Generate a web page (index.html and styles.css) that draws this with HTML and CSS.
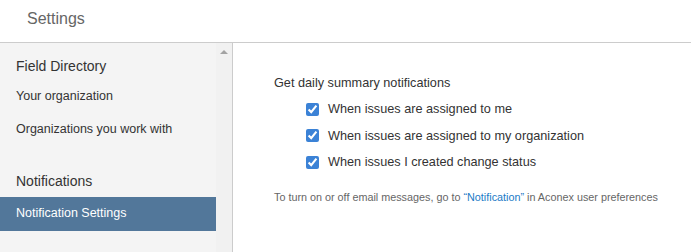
FILE: index.html
```html
<!DOCTYPE html>
<html lang="en">
<head>
    <meta charset="UTF-8">
    <title>Settings</title>
    <link rel="stylesheet" href="styles.css">
</head>
<body>
    <div class="header">Settings</div>
    <div class="page">
        <div class="sidebar">
            <div class="nav">
                <div class="group">Field Directory</div>
                <div class="item">Your organization</div>
                <div class="item">Organizations you work with</div>
                <div class="group spaced">Notifications</div>
                <div class="item active">Notification Settings</div>
            </div>
            <div class="scrollbar">
                <span class="arrow"></span>
            </div>
        </div>
        <div class="content">
            <div class="title">Get daily summary notifications</div>
            <label class="option"><input type="checkbox" checked> When issues are assigned to me</label>
            <label class="option"><input type="checkbox" checked> When issues are assigned to my organization</label>
            <label class="option"><input type="checkbox" checked> When issues I created change status</label>
            <p class="note">To turn on or off email messages, go to <a href="#">“Notification”</a> in Aconex user preferences</p>
        </div>
    </div>
</body>
</html>
```

FILE: styles.css
```css
body {
    margin: 0;
    font-family: Arial, "Liberation Sans", sans-serif;
    background: #fff;
    color: #333;
    height: 252px;
    overflow: hidden;
}

.header {
    height: 42px;
    line-height: 38px;
    padding-left: 27px;
    font-size: 16px;
    color: #666;
    border-bottom: 1px solid #ccc;
}

.page {
    display: flex;
    height: 209px;
}

.sidebar {
    width: 232px;
    display: flex;
    background: #f4f4f4;
    border-right: 1px solid #ccc;
}

.nav {
    flex: 1;
    padding-top: 13px;
}

.group {
    font-size: 14px;
    color: #333;
    padding-left: 16px;
    height: 20px;
    line-height: 20px;
    margin-bottom: 4px;
}

.group.spaced {
    margin-top: 25px;
    margin-bottom: 6px;
}

.item {
    font-size: 12.5px;
    color: #333;
    padding-left: 16px;
    height: 33px;
    line-height: 32px;
}

.item.active {
    height: 34px;
    line-height: 32px;
    background: #52779a;
    color: #fff;
}

.scrollbar {
    width: 16px;
    background: #f1f1f1;
    display: flex;
    justify-content: center;
}

.arrow {
    margin-top: 7px;
    width: 0;
    height: 0;
    border-left: 4px solid transparent;
    border-right: 4px solid transparent;
    border-bottom: 4px solid #a3a3a3;
}

.content {
    flex: 1;
    padding: 33px 0 0 41px;
}

.title {
    font-size: 12.7px;
    color: #333;
    margin-bottom: 6px;
}

.option {
    display: flex;
    align-items: center;
    font-size: 12.7px;
    color: #333;
    margin-left: 32px;
    height: 26.5px;
}

.option input {
    width: 13px;
    height: 13px;
    margin: 0 9px 0 0;
    accent-color: #3b82d6;
}

.note {
    font-size: 10.8px;
    color: #666;
    margin: 15px 0 0;
}

.note a {
    color: #1a7ac6;
    text-decoration: none;
}
```
